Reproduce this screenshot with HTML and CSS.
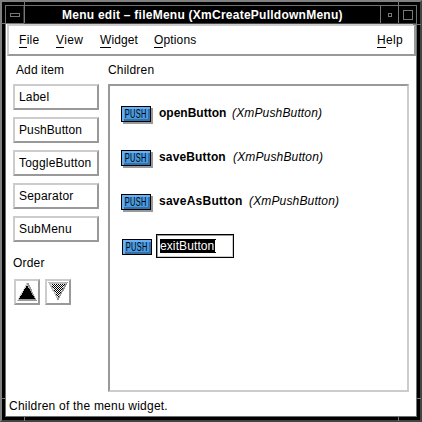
FILE: index.html
```
<!DOCTYPE html>
<html lang="en">
<head>
<meta charset="utf-8">
<title>Menu edit - fileMenu (XmCreatePulldownMenu)</title>
<link rel="stylesheet" href="styles.css">
</head>
<body>
<div class="window">
  <i class="notch notch-tl-v"></i><i class="notch notch-tl-h"></i>
  <i class="notch notch-tr-v"></i><i class="notch notch-tr-h"></i>
  <i class="notch notch-bl-v"></i><i class="notch notch-bl-h"></i>
  <i class="notch notch-br-v"></i><i class="notch notch-br-h"></i>
  <div class="inner">
    <header class="titlebar">
      <div class="tbtn menu-btn"><span></span></div>
      <h1><span class="title-text">Menu edit – fileMenu (XmCreatePulldownMenu)</span></h1>
      <div class="tbtn min-btn"><span></span></div>
      <div class="tbtn max-btn"><span></span></div>
    </header>
    <nav class="menubar">
      <span class="m-file"><u>F</u>ile</span>
      <span class="m-view"><u>V</u>iew</span>
      <span class="m-widget"><u>W</u>idget</span>
      <span class="m-options"><u>O</u>ptions</span>
      <span class="m-help"><u>H</u>elp</span>
    </nav>
    <main class="content">
      <section class="side">
        <div class="heading">Add item</div>
        <div class="buttons">
          <div class="button">Label</div>
          <div class="button b-push">PushButton</div>
          <div class="button b-toggle">ToggleButton</div>
          <div class="button b-sep">Separator</div>
          <div class="button b-sub">SubMenu</div>
        </div>
        <div class="order">Order</div>
        <div class="arrows">
          <div class="arrow"><svg width="22" height="22" viewBox="0 0 22 22" shape-rendering="crispEdges"><path d="M11 1L1 20H21Z" fill="#ccc"/><path d="M12 1L21 20H1L3 18H18L11 3Z" fill="#999"/><path d="M11 4L3 18H19Z" fill="#000"/></svg></div>
          <div class="arrow"><svg width="22" height="22" viewBox="0 0 22 22" shape-rendering="crispEdges"><defs><pattern id="dots" width="2" height="2" patternUnits="userSpaceOnUse"><path fill="#fff" d="M0 0h2v2H0z"/><path d="M0 0h1v1H0zM1 1h1v1H1z"/></pattern></defs><path d="M1 1H21L11 20Z" fill="#bbb"/><path d="M21 1L11 20L10 18L18 3Z" fill="#999"/><path d="M4 3H18L11 17Z" fill="url(#dots)"/></svg></div>
        </div>
      </section>
      <section class="children">
        <div class="heading">Children</div>
        <div class="list">
          <div class="row"><span class="push"><span>PUSH</span></span><b class="n1">openButton</b><em>(XmPushButton)</em></div>
          <div class="row"><span class="push"><span>PUSH</span></span><b class="n2">saveButton</b><em>(XmPushButton)</em></div>
          <div class="row"><span class="push"><span>PUSH</span></span><b class="n3">saveAsButton</b><em>(XmPushButton)</em></div>
          <div class="row editing"><span class="push flat"><span>PUSH</span></span><div class="field"><span class="selected">exitButton</span><i class="caret"></i></div></div>
        </div>
      </section>
    </main>
    <footer class="status">Children of the menu widget.</footer>
  </div>
</div>
</body>
</html>
```
FILE: styles.css
```
* { box-sizing: border-box; }
body { margin: 0; font: 12px/14px "Liberation Sans", Arial, sans-serif; color: #000; overflow: hidden; }
.window { position: relative; width: 422px; height: 422px; padding: 3px; background: #000; border: 2px solid; border-color: #808080 #444 #444 #808080; }
.inner { width: 412px; height: 412px; border: 1px solid #707070; background: #fff; display: flex; flex-direction: column; }
.notch { position: absolute; background: #777; z-index: 1; }
.notch-tl-v { left: 22px; top: -1px; width: 1px; height: 22px; }
.notch-tl-h { left: -1px; top: 21px; width: 23px; height: 1px; }
.notch-tr-v { left: 396px; top: -1px; width: 1px; height: 22px; }
.notch-tr-h { left: 411px; top: 22px; width: 8px; height: 1px; }
.notch-bl-v { left: 22px; top: 415px; width: 1px; height: 4px; }
.notch-bl-h { left: -1px; top: 396px; width: 4px; height: 1px; }
.notch-br-v { left: 396px; top: 415px; width: 1px; height: 4px; }
.notch-br-h { left: 415px; top: 396px; width: 4px; height: 1px; }
.titlebar { flex: none; height: 18px; background: #000; border-bottom: 1px solid #444; color: #fff; display: flex; }
.titlebar h1 { flex: 1; margin: 0; padding: 1px 0 0 38px; font-size: 12px; line-height: 17px; font-weight: bold; white-space: nowrap; }
.title-text { letter-spacing: .25px; }
.tbtn { width: 18px; display: flex; align-items: center; justify-content: center; border-left: 1px solid #777; }
.tbtn span { border: 1px solid #777; }
.menu-btn { border-left: 0; border-right: 1px solid #333; }
.menu-btn span { width: 10px; height: 4px; }
.min-btn span { width: 4px; height: 4px; }
.max-btn span { width: 10px; height: 10px; }
.menubar { flex: none; height: 32px; margin-left: 1px; border: 2px solid; border-color: #ccc #999 #999 #ccc; display: flex; padding: 7px 11px 0 10px; white-space: nowrap; }
.menubar u { text-decoration: none; display: inline-block; height: 15px; border-bottom: 1px solid #000; }
.m-file { width: 37px; letter-spacing: .3px; }
.m-view { width: 44px; letter-spacing: .3px; }
.m-widget { width: 54px; letter-spacing: .1px; }
.m-options { letter-spacing: .15px; }
.m-help { margin-left: auto; letter-spacing: .3px; }
.content { display: flex; height: 336px; }
.side { width: 102px; padding: 7px 0 0 7px; }
.heading { height: 14px; padding-left: 3px; letter-spacing: .1px; }
.buttons { display: grid; gap: 7px; margin-top: 7px; width: 86px; }
.button { height: 26px; border: 2px solid; border-color: #ccc #999 #999 #ccc; padding: 4px 4px 0; letter-spacing: .2px; white-space: nowrap; }
.b-push { letter-spacing: .1px; }
.order { margin-top: 14px; letter-spacing: .2px; }
.arrows { display: flex; gap: 5px; margin: 9px 0 0 1px; }
.arrow { width: 26px; height: 26px; border: 2px solid; border-color: #ccc #999 #999 #ccc; }
.arrow svg { display: block; }
.children { padding-top: 7px; width: 301px; }
.children .heading { padding-left: 0; letter-spacing: .2px; }
.list { margin-top: 7px; height: 308px; border: 2px solid; border-color: #999 #ccc #ccc #999; padding: 10px 0 0 11px; }
.row { height: 44px; display: flex; padding-top: 10px; white-space: nowrap; }
.push { width: 30px; height: 16px; border: 1px solid #000; background: #4a9ae0; box-shadow: inset 2px 2px #69b1f3, inset -2px -2px #3471a8, 2px 2px #999; font-size: 12px; line-height: 14px; display: flex; justify-content: center; }
.push span { transform: scaleX(.62); letter-spacing: .5px; }
.push.flat { box-shadow: inset 2px 2px #69b1f3, inset -2px -2px #3471a8; }
.row b { margin-left: 8px; width: 68px; letter-spacing: 0; }
.row .n2 { width: 69px; letter-spacing: .15px; }
.row .n3 { width: 85px; letter-spacing: .25px; }
.row em { margin-left: 5px; letter-spacing: .15px; }
.editing { padding: 6px 0 0 1px; }
.editing .push { margin-top: 5px; }
.field { width: 78px; height: 24px; margin-left: 4px; border: 1px solid #000; box-shadow: inset 1px 1px #999, inset -1px -1px #ccc; padding: 4px 3px; display: flex; }
.selected { height: 14px; background: #000; color: #fff; width: 54px; letter-spacing: .1px; }
.caret { width: 2px; height: 14px; border: 1px solid #000; border-right: 0; }
.status { padding: 7px 3px 0; letter-spacing: .22px; }
```
